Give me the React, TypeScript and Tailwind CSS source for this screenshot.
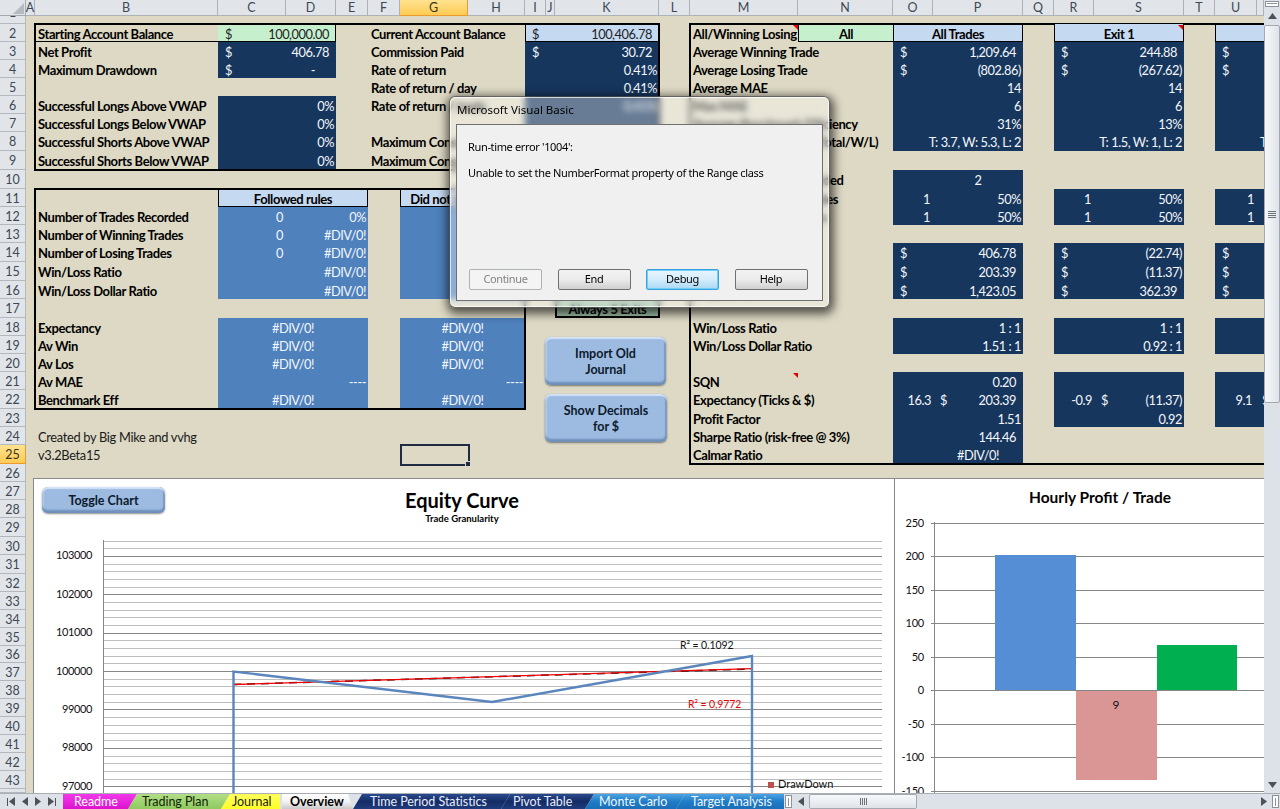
import type { ReactNode } from "react"

const navy = "bg-[#17365d] text-[#f4f7fb]"
const mid = "bg-[#4f81bd] text-[#f4f7fb]"
const head = "bg-[#c5d9f1] text-black font-bold text-[13px] tracking-[-0.4px] flex items-center justify-center pt-[4px]"
const green = "bg-[#c6efce]"

const label = "flex items-center pl-[3px] pt-[3px] font-bold text-[13px] tracking-[-0.4px] whitespace-nowrap"
const right = "flex items-center justify-end whitespace-nowrap pt-[3px] pr-[2px]"
const center = "flex items-center justify-center whitespace-nowrap pt-[3px]"

const columns = "ABCDEFGHIJKLMNOPQRSTUV".split("")
const rowCount = 44

// "C3:D4" -> grid lines. Line 1 is the header row / row-number column.
function place(at: string) {
  const [a, b = a] = at.split(":")
  const col = (s: string) => s.charCodeAt(0) - 63
  const row = (s: string) => Number(s.slice(1)) + 1
  return { gridColumn: `${col(a)} / ${col(b) + 1}`, gridRow: `${row(a)} / ${row(b) + 1}` }
}

function Cell({ at, className, children }: { at: string; className?: string; children?: ReactNode }) {
  return (
    <div className={className} style={place(at)}>
      {children}
    </div>
  )
}

function Money({ at, v, className = "" }: { at: string; v: string; className?: string }) {
  const neg = v.startsWith("(")
  return (
    <Cell at={at} className={`flex items-center justify-between pl-[7px] pt-[3px] whitespace-nowrap text-[#f4f7fb] ${neg ? "pr-[2px]" : "pr-[7px]"} ${className}`}>
      <span>$</span>
      <span>{v}</span>
    </Cell>
  )
}

function Note({ className = "" }: { className?: string }) {
  return <div className={`absolute w-[5px] h-[5px] bg-[#e00000] [clip-path:polygon(0_0,100%_0,100%_100%)] ${className}`} />
}

function SheetButton({ className, children }: { className: string; children: ReactNode }) {
  return (
    <div
      className={`absolute flex flex-col items-center justify-center rounded-[6px] bg-[#9dbbe1] pt-[2px] font-bold text-[12.5px] leading-[16px] text-[#0c1a2c] shadow-[inset_0_2px_1px_#d3e2f6,inset_0_-3px_2px_#6e8fba,inset_2px_0_1px_#b7cdea,inset_-2px_0_1px_#7c9bc4,0_1px_2px_rgba(0,0,0,0.45)] ${className}`}
    >
      {children}
    </div>
  )
}

function DialogButton({ children, kind = "normal" }: { children: ReactNode; kind?: "normal" | "off" | "focus" }) {
  const look = {
    normal: "border-[#707070] bg-gradient-to-b from-[#f2f2f2] via-[#ebebeb] to-[#cfcfcf] text-black",
    off: "border-[#adb2b5] bg-[#f4f4f4] text-[#838383]",
    focus: "border-[#3c9fe0] bg-gradient-to-b from-[#e8f5fd] via-[#d4ecfb] to-[#a9d8f5] text-black shadow-[inset_0_0_0_1px_#6fd0f5]",
  }[kind]
  return <div className={`flex h-[21px] w-[73px] items-center justify-center rounded-[2px] border ${look}`}>{children}</div>
}

function EquityChart() {
  const lines = Array.from({ length: 33 }, (_, i) => 540.5 + i * 7.68)
  const ticks = [
    ["103000", 555],
    ["102000", 594],
    ["101000", 632],
    ["100000", 671],
    ["99000", 709],
    ["98000", 747],
    ["97000", 786],
  ] as const
  return (
    <svg width="861" height="315" className="block">
      <g transform="translate(-34 -479)">
        {lines.map((y, i) => (
          <line key={y} x1="103" x2="882" y1={Math.round(y) + 0.5} y2={Math.round(y) + 0.5} stroke={i % 5 === 2 ? "#868686" : "#bdbdbd"} />
        ))}
        <line x1="103.5" x2="103.5" y1="540" y2="793" stroke="#868686" />
        {ticks.map(([t, y]) => (
          <text key={t} x="92" y={y + 3.5} textAnchor="end" fontSize="11" letterSpacing="-0.4" fill="#111">
            {t}
          </text>
        ))}
        <text x="462" y="508" textAnchor="middle" fontSize="20" fontWeight="700" fill="#000">
          Equity Curve
        </text>
        <text x="462" y="522" textAnchor="middle" fontSize="9.5" fontWeight="700" fill="#000">
          Trade Granularity
        </text>
        <line x1="233" x2="752" y1="684.5" y2="669" stroke="#222" strokeWidth="1.5" strokeDasharray="8 6" />
        <line x1="233" x2="752" y1="684.5" y2="668.7" stroke="#f00000" strokeWidth="1.3" />
        <polyline points="233.5,800 233.5,671.5 492,702 752,656 752,800" fill="none" stroke="#5a86bd" strokeWidth="2.4" />
        <text x="680" y="649" fontSize="10.5" letterSpacing="-0.1" fill="#111">
          R² = 0.1092
        </text>
        <text x="688" y="708" fontSize="10.5" letterSpacing="-0.1" fill="#f00000">
          R² = 0,9772
        </text>
        <rect x="768" y="782" width="6" height="6" fill="#c0504d" />
        <text x="778" y="788" fontSize="11" fill="#111">
          DrawDown
        </text>
      </g>
    </svg>
  )
}

function HourlyChart() {
  const ticks = [250, 200, 150, 100, 50, 0, -50, -100, -150]
  return (
    <svg width="369" height="315" className="block">
      <g transform="translate(-895 -479)">
        {ticks.map((t, i) => {
          const y = Math.round(522.5 + i * 33.5) + 0.5
          return (
            <g key={t}>
              <line x1="931" x2="1264" y1={y} y2={y} stroke="#868686" />
              <text x="924" y={y + 3.5} textAnchor="end" fontSize="11" letterSpacing="-0.2" fill="#111">
                {t}
              </text>
            </g>
          )
        })}
        <line x1="934.5" x2="934.5" y1="522" y2="793" stroke="#868686" />
        <text x="1100" y="503" textAnchor="middle" fontSize="15.5" fontWeight="700" fill="#000">
          Hourly Profit / Trade
        </text>
        <rect x="995" y="555" width="81" height="135" fill="#558ed5" />
        <rect x="1076" y="691" width="81" height="89" fill="#d99694" />
        <rect x="1157" y="645" width="80" height="45" fill="#00b050" />
        <text x="1116" y="709" textAnchor="middle" fontSize="12" fill="#111">
          9
        </text>
      </g>
    </svg>
  )
}

const tabs = [
  { name: "Readme", w: "w-[74px]", look: "from-[#f236ea] to-[#dc10cf] text-white", clip: "[clip-path:polygon(0_0,100%_0,calc(100%-9px)_100%,0_100%)] pl-[11px]" },
  { name: "Trading Plan", w: "w-[102px] -ml-[9px]", look: "from-[#b2de86] to-[#8fc95d] text-[#10240a]", clip: "[clip-path:polygon(9px_0,100%_0,calc(100%-9px)_100%,0_100%)] pl-[14px]" },
  { name: "Journal", w: "w-[59px] -ml-[9px]", look: "from-[#ffff5a] to-[#ffff20] text-[#222]", clip: "[clip-path:polygon(9px_0,100%_0,100%_100%,0_100%)] pl-[11px]" },
  { name: "Overview", w: "w-[80px] ml-[2px]", look: "from-[#ffffff] via-[#f4f4f4] to-[#c9c9c9] text-black font-bold", clip: "[clip-path:polygon(0_0,calc(100%-14px)_0,calc(100%-9px)_100%,0_100%)] pl-[8px]" },
  { name: "Time Period Statistics", w: "w-[157px] -ml-[9px]", look: "from-[#2a4a8e] via-[#142c66] to-[#1f3c7c] text-[#e8eefb]", clip: "[clip-path:polygon(9px_0,100%_0,calc(100%-9px)_100%,0_100%)] pl-[17px]" },
  { name: "Pivot Table", w: "w-[93px] -ml-[9px]", look: "from-[#2a4a8e] via-[#142c66] to-[#1f3c7c] text-[#e8eefb]", clip: "[clip-path:polygon(9px_0,100%_0,calc(100%-9px)_100%,0_100%)] pl-[12px]" },
  { name: "Monte Carlo", w: "w-[100px] -ml-[9px]", look: "from-[#4aa3e4] via-[#1f7cc6] to-[#1a6fb8] text-[#f0f7fe]", clip: "[clip-path:polygon(9px_0,100%_0,calc(100%-9px)_100%,0_100%)] pl-[14px]" },
  { name: "Target Analysis", w: "w-[108px] -ml-[9px]", look: "from-[#4aa3e4] via-[#1f7cc6] to-[#1a6fb8] text-[#f0f7fe]", clip: "[clip-path:polygon(9px_0,100%_0,100%_100%,0_100%)] pl-[15px]" },
]

function Triangle({ points, w = 6, h = 9 }: { points: string; w?: number; h?: number }) {
  return (
    <svg width={w} height={h} viewBox={`0 0 ${w} ${h}`} className="shrink-0">
      <polygon points={points} fill="#4d5158" />
    </svg>
  )
}

function Grip({ vertical }: { vertical?: boolean }) {
  return (
    <div className={`flex ${vertical ? "flex-col w-[8px]" : "h-[7px]"} gap-[1px]`}>
      {[0, 1, 2, 3].map((i) => (
        <div key={i} className={vertical ? "h-[1px] bg-[#6d727a]" : "w-[1px] bg-[#6d727a]"} />
      ))}
    </div>
  )
}

function TabBar() {
  return (
    <div className="flex h-[16px] items-stretch border-t border-[#a9aeb6] bg-[#dde1e8]">
      <div className="flex w-[63px] shrink-0 items-center justify-around px-[3px]">
        <div className="flex items-center gap-[1px]">
          <div className="h-[8px] w-[1px] bg-[#4d5158]" />
          <Triangle points="6,0 0,4.5 6,9" />
        </div>
        <Triangle points="6,0 0,4.5 6,9" />
        <Triangle points="0,0 6,4.5 0,9" />
        <div className="flex items-center gap-[1px]">
          <Triangle points="0,0 6,4.5 0,9" />
          <div className="h-[8px] w-[1px] bg-[#4d5158]" />
        </div>
      </div>
      <div className="flex w-[722px] shrink-0 text-[12.5px] tracking-[-0.05px]">
        {tabs.map((t) => (
          <div key={t.name} className={`${t.w} ${t.look} ${t.clip} flex items-center whitespace-nowrap bg-gradient-to-b pt-[1px]`}>
            {t.name}
          </div>
        ))}
      </div>
      <div className="my-[1px] flex w-[7px] shrink-0 items-center justify-center border border-[#8d929a] bg-white">
        <div className="h-[8px] w-[1px] bg-[#8d929a]" />
      </div>
      <div className="flex w-[17px] shrink-0 items-center justify-center">
        <Triangle points="6,0 0,4.5 6,9" />
      </div>
      <div className="flex w-[108px] shrink-0 items-center justify-center rounded-[2px] border border-[#a4a9b1] bg-gradient-to-b from-[#f7f8fa] to-[#dfe3e9]">
        <Grip />
      </div>
      <div className="flex-1" />
      <div className="flex w-[16px] shrink-0 items-center justify-center">
        <Triangle points="0,0 6,4.5 0,9" />
      </div>
      <div className="mr-[1px] my-[1px] flex w-[7px] shrink-0 items-center justify-center border border-[#8d929a] bg-white">
        <div className="h-[8px] w-[1px] bg-[#8d929a]" />
      </div>
    </div>
  )
}

function VScroll() {
  return (
    <div className="flex w-[16px] shrink-0 flex-col items-center bg-[#dde1e8]">
      <div className="mt-[1px] h-[6px] w-[14px] border border-[#8d929a] bg-white p-[1px]">
        <div className="h-[1px] w-full bg-[#8d929a]" />
      </div>
      <div className="flex h-[18px] items-center">
        <Triangle w={9} h={6} points="4.5,0 9,6 0,6" />
      </div>
      <div className="flex h-[378px] w-full items-center justify-center rounded-[2px] border border-[#a4a9b1] bg-gradient-to-r from-[#f7f8fa] to-[#dfe3e9]">
        <Grip vertical />
      </div>
      <div className="flex-1" />
      <div className="mb-[5px] flex h-[6px] items-center">
        <Triangle w={9} h={6} points="0,0 9,0 4.5,6" />
      </div>
    </div>
  )
}

export default function App() {
  return (
    <div className="flex h-[809px] w-[1280px] flex-col overflow-hidden bg-[#dde1e8] text-[13px] text-black [font-family:Lato,sans-serif]">
      <div className="flex h-[793px] shrink-0">
        <div className="relative w-[1264px] overflow-hidden">
          <div className="grid h-[793px] w-[1264px] bg-[#ddd9c4] text-[12.8px] tracking-[-0.45px] grid-cols-[26px_9px_183px_68px_50px_32px_32px_68px_57px_21px_9px_104px_31px_108px_95px_40px_90px_31px_40px_90px_31px_42px_7px] grid-rows-[16px_8px_18px_18px_18px_18px_18px_18px_19px_19px_19px_18px_18px_18px_19px_19px_18px_19px_18px_18px_18px_18px_19px_18px_18px_19px_18px_18px_18px_19px_18px_19px_18px_18px_18px_18px_17px_18px_18px_18px_18px_18px_18px_18px_4px]">
            {/* Headers */}
            <div className="relative border-b border-r border-[#a3a7ae] bg-[#e1e5ea]" style={{ gridColumn: 1, gridRow: 1 }}>
              <div className="absolute bottom-[1px] right-[1px] h-[11px] w-[11px] bg-[#b5bac1] [clip-path:polygon(100%_0,100%_100%,0_100%)]" />
            </div>
            {columns.map((c, i) => (
              <div
                key={c}
                className={`flex items-center justify-center border-b pt-[2px] text-[12.5px] tracking-normal ${c === "G" ? "border-r border-[#ef9a30] bg-gradient-to-b from-[#ffe38f] to-[#ffcb52] text-[#3a3320]" : "border-r border-[#adb1b8] bg-[#e1e5ea] text-[#3d4854]"}`}
                style={{ gridColumn: i + 2, gridRow: 1 }}
              >
                {c !== "V" ? c : ""}
              </div>
            ))}
            {Array.from({ length: rowCount }, (_, i) => i + 1).map((n) => (
              <div
                key={n}
                className={`flex justify-center overflow-hidden border-b border-r text-[12.5px] tracking-normal ${n === 1 ? "items-end" : "items-center pt-[3px]"} ${n === 25 ? "border-[#ef9a30] bg-gradient-to-b from-[#ffe38f] to-[#ffcb52] text-[#3a3320]" : "border-[#b3b7be] bg-[#e1e5ea] text-[#3d4854]"}`}
                style={{ gridColumn: 1, gridRow: n + 1 }}
              >
                {n < 44 ? n : ""}
              </div>
            ))}

            {/* Account block */}
            <Cell at="B2" className={`${label} !pt-[4px] border-b border-black`}>Starting Account Balance</Cell>
            <Cell at="C2:D2" className={`${green} border-b border-r border-black`} />
            <Money at="C2:D2" v="100,000.00" className="!text-[#222]" />
            <Cell at="B3" className={label}>Net Profit</Cell>
            <Cell at="C3:D4" className={navy} />
            <Money at="C3:D3" v="406.78" />
            <Cell at="B4" className={label}>Maximum Drawdown</Cell>
            <Money at="C4:D4" v="- " className="[&>span:last-child]:mr-[14px]" />
            <Cell at="C6:D9" className={navy} />
            {["Successful Longs Above VWAP", "Successful Longs Below VWAP", "Successful Shorts Above VWAP", "Successful Shorts Below VWAP"].map((t, i) => (
              <div key={t} className="contents">
                <Cell at={`B${i + 6}`} className={label}>{t}</Cell>
                <Cell at={`C${i + 6}:D${i + 6}`} className={`${right} text-[#f4f7fb]`}>0%</Cell>
              </div>
            ))}
            <Cell at="F2" className={label}>Current Account Balance</Cell>
            <Cell at="F3" className={label}>Commission Paid</Cell>
            <Cell at="F4" className={label}>Rate of return</Cell>
            <Cell at="F5" className={label}>Rate of return / day</Cell>
            <Cell at="F6" className={label}>Rate of return / trade</Cell>
            <Cell at="F8" className={label}>Maximum Consecutive Wins</Cell>
            <Cell at="F9" className={label}>Maximum Consecutive Losses</Cell>
            <Cell at="I2:K2" className="border-b border-l border-black bg-[#c5d9f1]" />
            <Money at="I2:K2" v="100,406.78" className="!text-[#222]" />
            <Cell at="I3:K9" className={navy} />
            <Money at="I3:K3" v="30.72" />
            <Cell at="I4:K4" className={`${right} text-[#f4f7fb]`}>0.41%</Cell>
            <Cell at="I5:K5" className={`${right} text-[#f4f7fb]`}>0.41%</Cell>
            <Cell at="I6:K6" className={`${right} text-[#f4f7fb]`}>0.41%</Cell>
            <Cell at="B2:K9" className="pointer-events-none -m-[1px] border-2 border-black" />

            {/* Rules block */}
            <Cell at="C11:E11" className={`${head} border-b border-l border-r border-black`}>Followed rules</Cell>
            <Cell at="G11:H11" className={`${head} border-b border-l border-black`}>Did not follow rules</Cell>
            <Cell at="C12:E16" className={mid} />
            <Cell at="G12:H16" className={mid} />
            <Cell at="C18:E22" className={mid} />
            <Cell at="G18:H22" className={mid} />
            {["Number of Trades Recorded", "Number of Winning Trades", "Number of Losing Trades", "Win/Loss Ratio", "Win/Loss Dollar Ratio"].map((t, i) => (
              <div key={t} className="contents">
                <Cell at={`B${i + 12}`} className={label}>{t}</Cell>
                <Cell at={`D${i + 12}:E${i + 12}`} className={`${right} text-[#f4f7fb]`}>{i === 0 ? "0%" : "#DIV/0!"}</Cell>
                {i < 3 && <Cell at={`C${i + 12}`} className={`${right} pr-[3px] text-[#f4f7fb]`}>0</Cell>}
              </div>
            ))}
            {["Expectancy", "Av Win", "Av Los", "Av MAE", "Benchmark Eff"].map((t, i) => {
              const r = i + 18
              return (
                <div key={t} className="contents">
                  <Cell at={`B${r}`} className={label}>{t}</Cell>
                  {t === "Av MAE" ? (
                    <>
                      <Cell at={`C${r}:E${r}`} className={`${right} text-[#f4f7fb]`}>----</Cell>
                      <Cell at={`G${r}:H${r}`} className={`${right} text-[#f4f7fb]`}>----</Cell>
                    </>
                  ) : (
                    <>
                      <Cell at={`C${r}:E${r}`} className={`${center} text-[#f4f7fb]`}>#DIV/0!</Cell>
                      <Cell at={`G${r}:H${r}`} className={`${center} text-[#f4f7fb]`}>#DIV/0!</Cell>
                    </>
                  )}
                </div>
              )
            })}
            <Cell at="B11:H22" className="pointer-events-none -m-[1px] border-2 border-black" />

            <Cell at="B24" className="flex items-center whitespace-nowrap pl-[3px] pt-[3px] tracking-[-0.3px] text-[#1a1a1a]">Created by Big Mike and vvhg</Cell>
            <Cell at="B25" className="flex items-center whitespace-nowrap pl-[3px] pt-[3px] tracking-[-0.3px] text-[#1a1a1a]">v3.2Beta15</Cell>
            <Cell at="G25" className="relative -mb-[2px] -mr-[2px] -mt-[1px] border-2 border-[#1f2a44]">
              <div className="absolute -bottom-[3px] -right-[3px] h-[6px] w-[6px] border border-[#ddd9c4] bg-[#1f2a44]" />
            </Cell>

            <Cell at="K16:K17" className="-mr-[1px] flex flex-col justify-end border-2 border-black bg-[#a6c8ad] text-center text-[13px] font-bold leading-[13px] tracking-[-0.4px]">
              Always 5 Exits
            </Cell>

            {/* Trade stats block */}
            <Cell at="M2" className={`${label} relative`}>
              All/Winning Losing
              <Note className="right-0 top-[1px]" />
            </Cell>
            <Cell at="N2" className={`${green} ${center} !pt-[4px] border-b border-l border-black text-[13px] font-bold`}>All</Cell>
            <Cell at="O2:P2" className={`${head} border-b border-l border-r border-black`}>All Trades</Cell>
            <Cell at="R2:S2" className={`${head} relative border-b border-l border-r border-black`}>
              Exit 1
              <Note className="right-0 top-[1px]" />
            </Cell>
            <Cell at="U2:V2" className={`${head} border-b border-l border-black`} />

            {["O", "R", "U"].map((c) => {
              const d = c === "O" ? "P" : c === "R" ? "S" : "V"
              return (
                <div key={c} className="contents">
                  <Cell at={`${c}3:${d}8`} className={navy} />
                  <Cell at={`${c}11:${d}12`} className={navy} />
                  <Cell at={`${c}14:${d}16`} className={navy} />
                  <Cell at={`${c}18:${d}19`} className={navy} />
                  <Cell at={`${c}21:${d}23`} className={navy} />
                </div>
              )
            })}
            <Cell at="O10:P10" className={navy} />
            <Cell at="O24:P25" className={navy} />

            {[
              [3, "Average Winning Trade"],
              [4, "Average Losing Trade"],
              [5, "Average MAE"],
              [6, "Max MAE"],
              [7, "Average Benchmark Efficiency"],
              [8, "Average Reward : Risk (Total/W/L)"],
              [10, "Number of Trades Recorded"],
              [11, "Number of Winning Trades"],
              [12, "Number of Losing Trades"],
              [14, "Total Net Profit"],
              [15, "Average Trade"],
              [16, "Largest Win"],
              [18, "Win/Loss Ratio"],
              [19, "Win/Loss Dollar Ratio"],
              [21, "SQN"],
              [22, "Expectancy (Ticks & $)"],
              [23, "Profit Factor"],
              [24, "Sharpe Ratio (risk-free @ 3%)"],
              [25, "Calmar Ratio"],
            ].map(([r, t]) => (
              <Cell key={r} at={`M${r}`} className={label}>{t}</Cell>
            ))}
            <Cell at="M21" className="relative">
              <Note className="right-0 top-[1px]" />
            </Cell>

            <Money at="O3:P3" v="1,209.64" />
            <Money at="O4:P4" v="(802.86)" />
            <Money at="R3:S3" v="244.88" />
            <Money at="R4:S4" v="(267.62)" />
            <Cell at="U3" className="flex items-center pl-[7px] pt-[3px] text-[#f4f7fb]">$</Cell>
            <Cell at="U4" className="flex items-center pl-[7px] pt-[3px] text-[#f4f7fb]">$</Cell>

            {[
              [5, "14", "14"],
              [6, "6", "6"],
              [7, "31%", "13%"],
              [8, "T: 3.7, W: 5.3, L: 2", "T: 1.5, W: 1, L: 2"],
              [11, "50%", "50%"],
              [12, "50%", "50%"],
              [18, "1 : 1", "1 : 1"],
              [19, "1.51 : 1", "0.92 : 1"],
              [23, "1.51", "0.92"],
            ].map(([r, a, b]) => (
              <div key={r} className="contents">
                <Cell at={`O${r}:P${r}`} className={`${right} text-[#f4f7fb]`}>{a}</Cell>
                <Cell at={`R${r}:S${r}`} className={`${right} text-[#f4f7fb]`}>{b}</Cell>
              </div>
            ))}
            <Cell at="V8" className="flex items-center pl-[3px] pt-[3px] text-[#f4f7fb]">T</Cell>

            <Cell at="P10" className={`${center} text-[#f4f7fb]`}>2</Cell>
            {[11, 12].map((r) => (
              <div key={r} className="contents">
                <Cell at={`O${r}`} className={`${right} pr-[3px] text-[#f4f7fb]`}>1</Cell>
                <Cell at={`R${r}`} className={`${right} pr-[3px] text-[#f4f7fb]`}>1</Cell>
                <Cell at={`U${r}`} className={`${right} pr-[3px] text-[#f4f7fb]`}>1</Cell>
              </div>
            ))}

            {[
              [14, "406.78", "(22.74)"],
              [15, "203.39", "(11.37)"],
              [16, "1,423.05", "362.39"],
            ].map(([r, a, b]) => (
              <div key={r} className="contents">
                <Money at={`O${r}:P${r}`} v={a} />
                <Money at={`R${r}:S${r}`} v={b} />
                <Cell at={`U${r}`} className="flex items-center pl-[7px] pt-[3px] text-[#f4f7fb]">$</Cell>
              </div>
            ))}

            <Cell at="P21" className="flex items-center justify-end pr-[7px] pt-[3px] text-[#f4f7fb]">0.20</Cell>
            <Cell at="O22" className={`${right} text-[#f4f7fb]`}>16.3</Cell>
            <Money at="P22" v="203.39" />
            <Cell at="R22" className={`${right} text-[#f4f7fb]`}>-0.9</Cell>
            <Money at="S22" v="(11.37)" />
            <Cell at="U22" className={`${right} pr-[5px] text-[#f4f7fb]`}>9.1</Cell>
            <Cell at="V22" className="flex items-center pl-[5px] pt-[3px] text-[#f4f7fb]">$</Cell>
            <Cell at="P24" className="flex items-center justify-end pr-[7px] pt-[3px] text-[#f4f7fb]">144.46</Cell>
            <Cell at="P25" className={`${center} text-[#f4f7fb]`}>#DIV/0!</Cell>

            <Cell at="M2:V25" className="pointer-events-none -my-[1px] -ml-[1px] -mr-[4px] border-2 border-black" />
          </div>

          {/* Floating shapes and charts */}
          <SheetButton className="left-[545px] top-[337px] h-[48px] w-[121px]">
            <span>Import Old</span>
            <span>Journal</span>
          </SheetButton>
          <SheetButton className="left-[545px] top-[394px] h-[48px] w-[122px]">
            <span>Show Decimals</span>
            <span>for $</span>
          </SheetButton>

          <div className="absolute left-[33px] top-[478px] h-[316px] w-[862px] border-l border-t border-[#8a8a8a] bg-white">
            <EquityChart />
            <SheetButton className="left-[8px] top-[8px] h-[26px] w-[123px] !leading-[14px]">Toggle Chart</SheetButton>
          </div>
          <div className="absolute left-[894px] top-[478px] h-[316px] w-[370px] border-l border-t border-[#8a8a8a] bg-white">
            <HourlyChart />
          </div>

          {/* Run-time error dialog */}
          <div className="absolute left-[449px] top-[96px] flex h-[212px] w-[381px] flex-col rounded-[6px] border border-[#2c2c2c]/70 bg-white/35 px-[6px] pb-[6px] shadow-[1px_3px_10px_3px_rgba(0,0,0,0.62),inset_0_0_0_1px_rgba(255,255,255,0.7)] backdrop-blur-[3px] [font-family:'Noto_Sans',sans-serif]">
            <div className="flex h-[27px] shrink-0 items-center pb-[1px] pl-[1px] text-[11.5px] text-black">Microsoft Visual Basic</div>
            <div className="flex flex-1 flex-col border border-[#6f6f6f] bg-[#f0f0f0] px-[11px] text-[11px] tracking-[-0.35px] text-black">
              <p className="mt-[14px] leading-[16px]">Run-time error '1004':</p>
              <p className="mt-[10px] leading-[16px]">Unable to set the NumberFormat property of the Range class</p>
              <div className="mb-[10px] mt-auto flex gap-[15.5px] pl-[1px]">
                <DialogButton kind="off">Continue</DialogButton>
                <DialogButton>End</DialogButton>
                <DialogButton kind="focus">Debug</DialogButton>
                <DialogButton>Help</DialogButton>
              </div>
            </div>
          </div>
        </div>
        <VScroll />
      </div>
      <TabBar />
    </div>
  )
}
